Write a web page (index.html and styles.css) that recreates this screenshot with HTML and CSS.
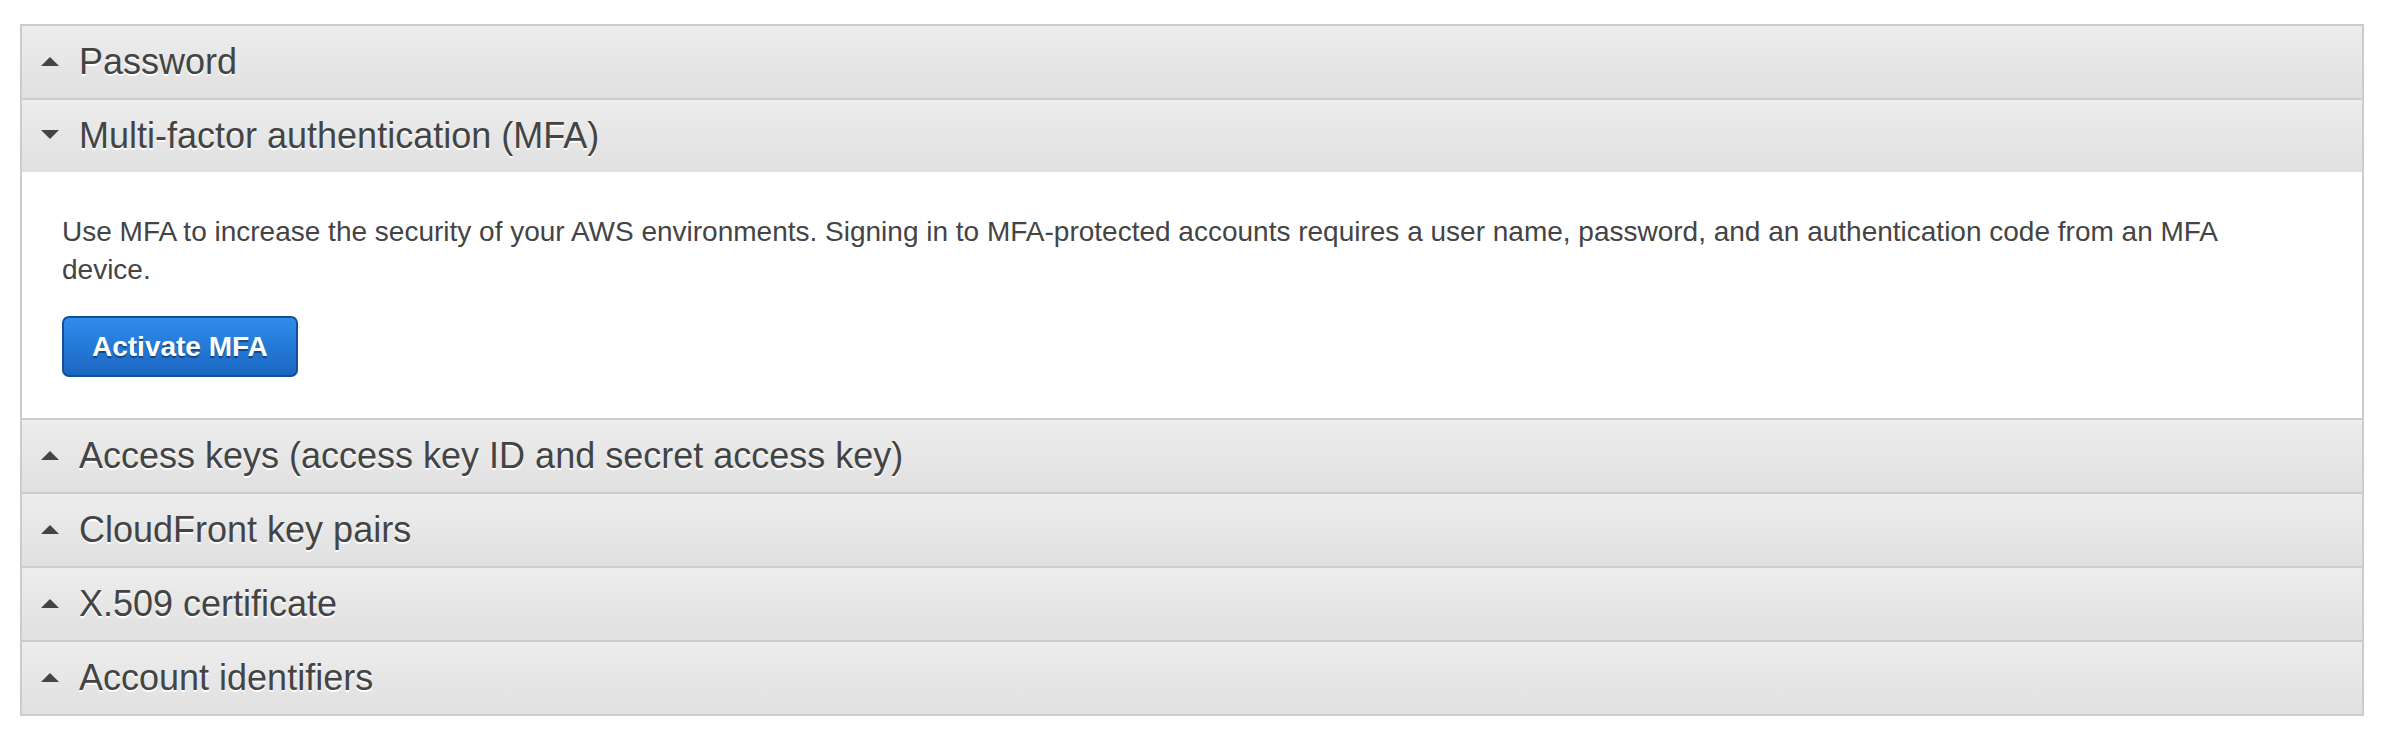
FILE: index.html
```html
<!DOCTYPE html>
<html lang="en">
<head>
<meta charset="utf-8">
<title>Security credentials</title>
<link rel="stylesheet" href="styles.css">
</head>
<body>
<div class="page">
  <div class="accordion">
    <div class="section">
      <div class="header"><span class="caret caret-up"></span><span class="title">Password</span></div>
    </div>
    <div class="section open">
      <div class="header"><span class="caret caret-down"></span><span class="title">Multi-factor authentication (MFA)</span></div>
      <div class="content">
        <p class="desc">Use MFA to increase the security of your AWS environments. Signing in to MFA-protected accounts requires a user name, password, and an authentication code from an MFA device.</p>
        <button class="btn-primary" type="button">Activate MFA</button>
      </div>
    </div>
    <div class="section">
      <div class="header"><span class="caret caret-up"></span><span class="title">Access keys (access key ID and secret access key)</span></div>
    </div>
    <div class="section">
      <div class="header"><span class="caret caret-up"></span><span class="title">CloudFront key pairs</span></div>
    </div>
    <div class="section">
      <div class="header"><span class="caret caret-up"></span><span class="title">X.509 certificate</span></div>
    </div>
    <div class="section">
      <div class="header"><span class="caret caret-up"></span><span class="title">Account identifiers</span></div>
    </div>
  </div>
</div>
</body>
</html>
```

FILE: styles.css
```css
html, body {
  margin: 0;
  padding: 0;
  background: #ffffff;
}

body {
  font-family: "Liberation Sans", Arial, Helvetica, sans-serif;
  color: #444444;
}

.page {
  padding: 24px 26px 0 20px;
}

.accordion {
  border: 2px solid #cccccc;
  border-bottom: none;
  background: #ffffff;
}

.section {
  border-bottom: 2px solid #cccccc;
}

.header {
  height: 72px;
  display: flex;
  align-items: center;
  padding-left: 19px;
  background: linear-gradient(to bottom, #ededed 0%, #e0e0e0 100%);
}

.caret {
  width: 0;
  height: 0;
  border-left: 9px solid transparent;
  border-right: 9px solid transparent;
  margin-right: 20px;
  margin-top: -1px;
}

.caret-up {
  border-bottom: 9px solid #444444;
}

.caret-down {
  border-top: 9px solid #444444;
  margin-top: -4px;
}

.title {
  font-size: 36px;
  line-height: 72px;
  color: #444444;
  text-shadow: 0 2px 0 #ffffff;
}

.content {
  padding: 41px 40px 41px 40px;
}

.desc {
  margin: 0 0 27px 0;
  max-width: 2220px;
  font-size: 28px;
  line-height: 38px;
  color: #444444;
}

.btn-primary {
  display: block;
  height: 61px;
  padding: 0 28px;
  font-family: "Liberation Sans", Arial, Helvetica, sans-serif;
  font-size: 28px;
  font-weight: bold;
  color: #ffffff;
  text-shadow: 0 2px 1px rgba(0, 0, 0, 0.4);
  background: linear-gradient(to bottom, #2f8ded 0%, #1b66c2 100%);
  border: 2px solid #154f95;
  border-radius: 7px;
  cursor: pointer;
}
```
